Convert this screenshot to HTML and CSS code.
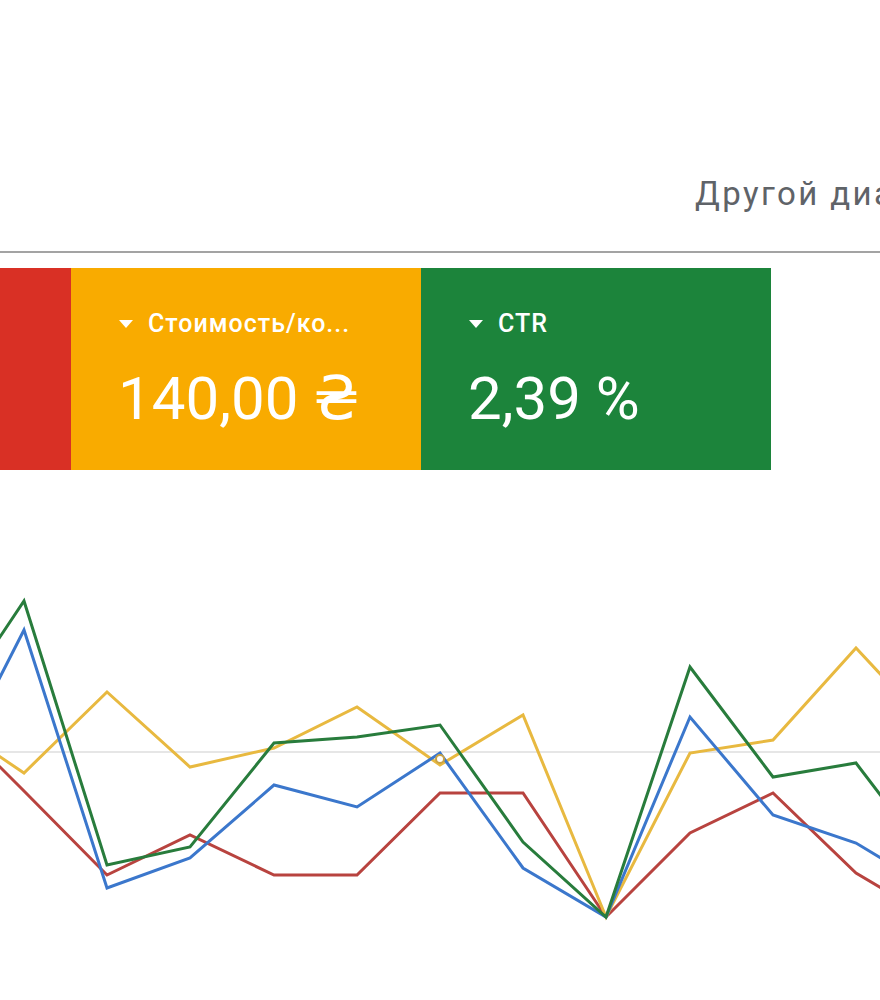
FILE: index.html
```
<!DOCTYPE html>
<html lang="ru">
<head>
    <meta charset="UTF-8">
    <meta name="viewport" content="width=device-width, initial-scale=1.0">
    <title>Обзор кампании</title>
    <link rel="stylesheet" href="styles.css">
</head>
<body>
    <div class="page">
        <div class="toolbar">
            <span class="range-link">Другой диапазон</span>
        </div>

        <div class="scorecards">
            <div class="scorecard red"></div>
            <div class="scorecard yellow">
                <div class="scorecard-label">
                    <svg class="caret" width="16" height="9" viewBox="0 0 16 9"><polygon points="1,0 15,0 8,8" fill="#fff"/></svg>
                    <span>Стоимость/ко...</span>
                </div>
                <div class="scorecard-value">140,00 ₴</div>
            </div>
            <div class="scorecard green">
                <div class="scorecard-label">
                    <svg class="caret" width="16" height="9" viewBox="0 0 16 9"><polygon points="1,0 15,0 8,8" fill="#fff"/></svg>
                    <span>CTR</span>
                </div>
                <div class="scorecard-value">2,39 %</div>
            </div>
        </div>

        <svg class="chart" width="880" height="530" viewBox="0 470 880 530">
            <line class="gridline" x1="0" y1="752" x2="880" y2="752"/>
            <polyline class="series series-red" points="-59,708 24,791 107,875 190,835 274,875 357,875 440,793 523,793 606,917 690,833 773,793 856,873 939,922"/>
            <polyline class="series series-yellow" points="-59,717 24,773 107,692 190,767 274,748 357,707 440,765 523,715 606,917 690,753 773,740 856,648 939,737"/>
            <polyline class="series series-blue" points="-59,793 24,630 107,888 190,858 274,785 357,807 440,753 523,868 606,917 690,717 773,815 856,843 939,893"/>
            <polyline class="series series-green" points="-59,725 24,601 107,865 190,847 274,743 357,737 440,725 523,842 606,917 690,667 773,777 856,763 939,872"/>
            <circle class="marker" cx="440" cy="759" r="4"/>
        </svg>
    </div>
</body>
</html>
```

FILE: styles.css
```
* {
    margin: 0;
    padding: 0;
    box-sizing: border-box;
}

body {
    background: #fff;
    font-family: 'Roboto', 'DejaVu Sans', sans-serif;
    overflow: hidden;
}

.page {
    width: 880px;
    overflow: hidden;
}

.toolbar {
    height: 253px;
    padding: 175px 0 0 695px;
    border-bottom: 2px solid #a3a3a3;
    white-space: nowrap;
    overflow: hidden;
}

.range-link {
    color: #5f6368;
    font-size: 33px;
    line-height: 38px;
    letter-spacing: 2.4px;
}

.scorecards {
    display: flex;
    margin-top: 15px;
    margin-left: -279px;
}

.scorecard {
    flex: 0 0 350px;
    height: 202px;
    padding: 41px 0 0 47px;
    color: #fff;
}

.scorecard.red { background: #d93025; }
.scorecard.yellow { background: #f9ab00; }
.scorecard.green { background: #1c843b; }

.scorecard-label {
    display: flex;
    align-items: center;
    gap: 14px;
    font-size: 25px;
    line-height: 30px;
    font-weight: 500;
    letter-spacing: 1px;
}

.caret {
    display: block;
    margin-top: 1px;
}

.scorecard-value {
    margin-top: 24px;
    font-size: 60px;
    line-height: 72px;
    font-weight: 400;
}

.chart {
    display: block;
}

.gridline {
    stroke: #e6e6e6;
    stroke-width: 2;
}

.series {
    fill: none;
    stroke-width: 3;
    stroke-linejoin: miter;
}

.series-red { stroke: #b8433f; }
.series-yellow { stroke: #e8b940; }
.series-blue { stroke: #3b77cc; }
.series-green { stroke: #287c3c; }

.marker {
    fill: #fff;
    stroke: #c8a244;
    stroke-width: 2;
}
```
